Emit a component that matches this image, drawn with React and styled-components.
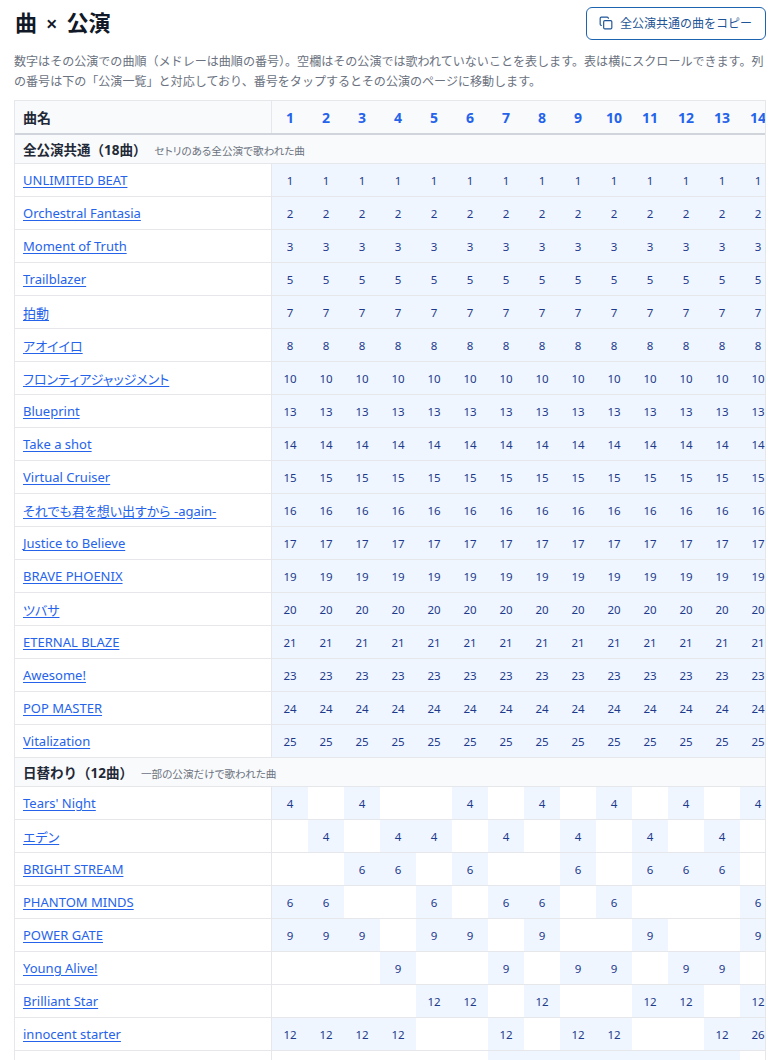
import React from 'react';
import styled, { createGlobalStyle } from 'styled-components';
import { Copy } from 'lucide-react';

const GlobalStyle = createGlobalStyle`
    body {
        margin: 0;
        background: #ffffff;
        font-family: "Noto Sans", "Noto Sans CJK JP", sans-serif;
        color: #1f2937;
    }
`;

const Page = styled.div`
    padding: 6px 14px 0;
`;

const Header = styled.div`
    display: flex;
    justify-content: space-between;
    align-items: center;
`;

const Title = styled.h1`
    margin: 0;
    font-size: 22px;
    line-height: 33px;
    font-weight: 700;
    color: #111827;
    padding-left: 1px;
    .times {
        font-size: 20px;
        font-weight: 600;
        margin: 0 9px;
    }
`;

const CopyButton = styled.button`
    display: flex;
    align-items: center;
    gap: 7px;
    height: 33px;
    padding: 0 13px 0 12px;
    border: 1px solid #1d64b0;
    border-radius: 6px;
    background: #ffffff;
    color: #1e5597;
    font-family: inherit;
    font-size: 12px;
    cursor: pointer;
`;

const Description = styled.p`
    margin: 11px 0 9px;
    font-family: "Noto Sans CJK JP", "Noto Sans", sans-serif;
    font-size: 12.05px;
    line-height: 20px;
    color: #6b7280;
`;

const Scroller = styled.div`
    border: 1px solid #e5e7eb;
    overflow-x: auto;
    overflow-y: hidden;
`;

const Table = styled.table`
    border-collapse: collapse;
    table-layout: fixed;
    width: 760px;
`;

const HeadCell = styled.th`
    height: 32px;
    padding: 0;
    background: #f9fafb;
    border-bottom: 2px solid #d1d5db;
    font-size: 14px;
    font-weight: 700;
    color: ${p => (p.$name ? '#1f2937' : '#2563eb')};
    text-align: ${p => (p.$name ? 'left' : 'center')};
    padding-left: ${p => (p.$name ? '8px' : '0')};
    width: ${p => (p.$name ? '248px' : '36px')};
    border-right: ${p => (p.$name ? '1px solid #e5e7eb' : 'none')};
`;

const SectionCell = styled.td`
    height: 28px;
    padding: 0 8px;
    background: #f9fafb;
    border-bottom: 1px solid #e5e7eb;
    font-size: 13.5px;
    font-weight: 700;
    color: #1f2937;
    white-space: nowrap;
    .note {
        font-size: 10.6px;
        font-weight: 400;
        color: #6b7280;
        margin-left: 8px;
        font-feature-settings: "palt";
    }
`;

const NameCell = styled.td`
    height: 32px;
    padding: 0 8px;
    border-bottom: 1px solid #e5e7eb;
    border-right: 1px solid #e5e7eb;
    font-size: 13px;
    white-space: nowrap;
    font-feature-settings: "palt";
    a {
        color: #2563eb;
        text-decoration: underline;
        text-underline-offset: 2px;
    }
`;

const NumCell = styled.td`
    padding: 0;
    text-align: center;
    border-bottom: 1px solid #e5e7eb;
    background: ${p => (p.$on ? '#eff6ff' : '#ffffff')};
    font-size: 11.5px;
    color: #1e3a8a;
`;

const SHOWS = 14;

const common = [
    ['UNLIMITED BEAT', 1], ['Orchestral Fantasia', 2], ['Moment of Truth', 3], ['Trailblazer', 5],
    ['拍動', 7], ['アオイイロ', 8], ['フロンティアジャッジメント', 10], ['Blueprint', 13],
    ['Take a shot', 14], ['Virtual Cruiser', 15], ['それでも君を想い出すから -again-', 16],
    ['Justice to Believe', 17], ['BRAVE PHOENIX', 19], ['ツバサ', 20], ['ETERNAL BLAZE', 21],
    ['Awesome!', 23], ['POP MASTER', 24], ['Vitalization', 25],
].map(([name, n]) => ({ name, cells: Array(SHOWS).fill(n) }));

const rotate = (name, map) => {
    const cells = Array(SHOWS).fill(null);
    Object.entries(map).forEach(([col, n]) => { cells[col - 1] = n; });
    return { name, cells };
};

const each = (cols, n) => Object.fromEntries(cols.map(c => [c, n]));

const daily = [
    rotate("Tears' Night", each([1, 3, 6, 8, 10, 12, 14], 4)),
    rotate('エデン', each([2, 4, 5, 7, 9, 11, 13], 4)),
    rotate('BRIGHT STREAM', each([3, 4, 6, 9, 11, 12, 13], 6)),
    rotate('PHANTOM MINDS', each([1, 2, 5, 7, 8, 10, 14], 6)),
    rotate('POWER GATE', each([1, 2, 3, 5, 6, 8, 11, 14], 9)),
    rotate('Young Alive!', each([4, 7, 9, 10, 12, 13], 9)),
    rotate('Brilliant Star', each([5, 6, 8, 11, 12, 14], 12)),
    rotate('innocent starter', { ...each([1, 2, 3, 4, 7, 9, 10, 13], 12), 14: 26 }),
    rotate('メタモルフォーゼ', each([7, 8, 9, 10, 11, 12, 13], 14)),
];

const Section = ({ title, note }) => (
    <tr>
        <SectionCell colSpan={SHOWS + 1}>
            {title}<span className="note">{note}</span>
        </SectionCell>
    </tr>
);

const SongRow = ({ song }) => (
    <tr>
        <NameCell><a href="#">{song.name}</a></NameCell>
        {song.cells.map((n, i) => (
            <NumCell key={i} $on={n !== null}>{n}</NumCell>
        ))}
    </tr>
);

export default function App() {
    return (
        <>
            <GlobalStyle />
            <Page>
                <Header>
                    <Title>曲<span className="times">×</span>公演</Title>
                    <CopyButton><Copy size={14} strokeWidth={2} />全公演共通の曲をコピー</CopyButton>
                </Header>
                <Description>
                    数字はその公演での曲順（メドレーは曲順の番号）。空欄はその公演では歌われていないことを表します。表は横にスクロールできます。列の番号は下の「公演一覧」と対応しており、番号をタップするとその公演のページに移動します。
                </Description>
                <Scroller>
                    <Table>
                        <thead>
                            <tr>
                                <HeadCell $name>曲名</HeadCell>
                                {Array.from({ length: SHOWS }, (_, i) => (
                                    <HeadCell key={i}>{i + 1}</HeadCell>
                                ))}
                            </tr>
                        </thead>
                        <tbody>
                            <Section title="全公演共通（18曲）" note="セトリのある全公演で歌われた曲" />
                            {common.map(song => <SongRow key={song.name} song={song} />)}
                            <Section title="日替わり（12曲）" note="一部の公演だけで歌われた曲" />
                            {daily.map(song => <SongRow key={song.name} song={song} />)}
                        </tbody>
                    </Table>
                </Scroller>
            </Page>
        </>
    );
}
